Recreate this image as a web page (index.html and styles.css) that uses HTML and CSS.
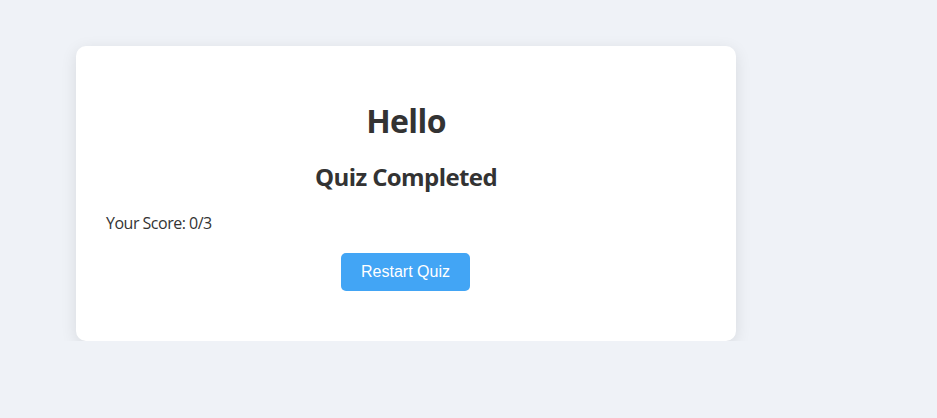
FILE: index.html
```html
<!DOCTYPE html>
<html>
<head>
<meta charset="utf-8">
<link rel="stylesheet" href="styles.css">
</head>
<body>
<div class="card">
  <h1 class="title">Hello</h1>
  <h2 class="subtitle">Quiz Completed</h2>
  <p class="score">Your Score: 0/3</p>
  <div class="actions">
    <button class="btn">Restart Quiz</button>
  </div>
</div>
</body>
</html>
```

FILE: styles.css
```css
html, body {
  margin: 0;
  background: #eff2f7;
}
body {
  padding: 46px 0 0 76px;
  font-family: "Open Sans", "Noto Sans", sans-serif;
  color: #333;
}
.card {
  width: 600px;
  padding: 30px;
  background: #fff;
  border-radius: 10px;
  box-shadow: 0 4px 16px rgba(0, 0, 0, 0.1);
}
.title {
  text-align: center;
  font-size: 32px;
  font-weight: 700;
  letter-spacing: -0.6px;
  margin: 24px 0 15px;
  line-height: 42px;
}
.subtitle {
  text-align: center;
  font-size: 24px;
  font-weight: 700;
  letter-spacing: -0.6px;
  margin: 19px 0 20px;
  line-height: 32px;
}
.score {
  font-size: 16px;
  letter-spacing: -0.5px;
  margin: 16px 0 19px;
  line-height: 21px;
}
.actions {
  display: flex;
  justify-content: center;
  padding-bottom: 20px;
}
.btn {
  font-family: "Liberation Sans", Arial, sans-serif;
  font-size: 16px;
  color: #fff;
  background: #42a5f5;
  border: none;
  border-radius: 5px;
  padding: 10px 20px;
  height: 38px;
  width: 129px;
  margin-right: 1px;
}
```
